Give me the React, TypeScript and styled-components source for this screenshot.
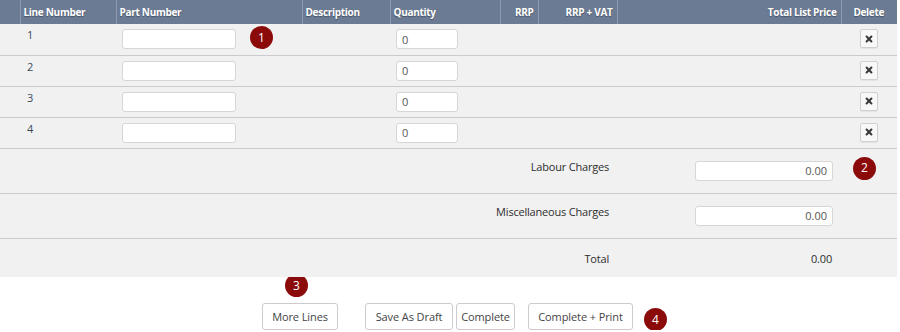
import React from "react";
import styled, { createGlobalStyle } from "styled-components";

const GlobalStyle = createGlobalStyle`
  body {
    margin: 0;
    background: #fff;
    font-family: "Open Sans", "DejaVu Sans", sans-serif;
    font-size: 11px;
    color: #333;
  }
`;

const Page = styled.div`
  width: 897px;
`;

const TableWrap = styled.div`
  position: relative;
  z-index: 1;
`;

const Table = styled.table`
  width: 897px;
  border-collapse: collapse;
  table-layout: fixed;
  background: #f1f1f1;
`;

const Th = styled.th<{ w: number; align?: string }>`
  width: ${({ w }) => w}px;
  height: 24px;
  padding: 0 4px 0 3px;
  box-sizing: border-box;
  background: #6c7b94;
  color: #fff;
  font-weight: 700;
  font-size: 10px;
  letter-spacing: -0.3px;
  text-align: ${({ align }) => align || "left"};
  text-shadow: 0 1px 1px rgba(0, 0, 0, 0.35);
  border-right: 1px solid #8f9aae;
  white-space: nowrap;
  &:last-child {
    border-right: none;
    text-align: center;
  }
`;

const Row = styled.tr<{ h: number }>`
  height: ${({ h }) => h}px;
  border-bottom: 1px solid #cbcbcb;
  &:last-child {
    border-bottom: none;
  }
`;

const Td = styled.td<{ align?: string; pad?: string }>`
  position: relative;
  padding: ${({ pad }) => pad || "5px 6px"};
  vertical-align: top;
  text-align: ${({ align }) => align || "left"};
  color: #333;
`;

const LineNo = styled.span`
  display: block;
  margin-top: -2px;
  padding-left: 1px;
  color: #3a4a5c;
`;

const Input = styled.input<{ w: number; right?: boolean }>`
  display: block;
  width: ${({ w }) => w}px;
  height: 20px;
  box-sizing: border-box;
  margin-left: ${({ right }) => (right ? "auto" : "0")};
  padding: 0 5px;
  border: 1px solid #d6d6d6;
  border-radius: 3px;
  background: #fff;
  font-family: inherit;
  font-size: 11px;
  color: #555;
  text-align: ${({ right }) => (right ? "right" : "left")};
  outline: none;
`;

const DeleteButton = styled.button`
  display: flex;
  align-items: center;
  justify-content: center;
  width: 18px;
  height: 19px;
  margin: 0 auto;
  padding: 0;
  border: 1px solid #d0d0d0;
  border-radius: 2px;
  background: #f8f8f8;
  box-shadow: 0 1px 1px rgba(0, 0, 0, 0.06);
  cursor: pointer;
`;

const Label = styled.span`
  display: block;
  font-size: 11px;
  letter-spacing: -0.2px;
  color: #2e2e2e;
`;

const Badge = styled.span`
  position: absolute;
  display: flex;
  align-items: center;
  justify-content: center;
  width: 23px;
  height: 23px;
  border-radius: 50%;
  background: #8b0b0b;
  color: #fff;
  font-size: 12px;
  line-height: 1;
`;

const Footer = styled.div`
  position: relative;
  display: flex;
  align-items: center;
  padding: 26px 0 0 262px;
`;

const Group = styled.div`
  display: flex;
  gap: 3px;
  margin-left: 27px;
`;

const Button = styled.button<{ w: number; gapLeft?: number }>`
  width: ${({ w }) => w}px;
  height: 27px;
  margin-left: ${({ gapLeft }) => gapLeft || 0}px;
  padding: 0;
  border: 1px solid #cccccc;
  border-radius: 3px;
  background: #fff;
  font-family: inherit;
  font-size: 11px;
  letter-spacing: -0.1px;
  color: #444;
  cursor: pointer;
`;

const Cross = () => (
  <svg width="8" height="8" viewBox="0 0 10 10">
    <path d="M2 2 L8 8 M8 2 L2 8" stroke="#3a3a3a" strokeWidth="2.6" strokeLinecap="round" />
  </svg>
);

const cols = [
  { w: 20, label: "" },
  { w: 96, label: "Line Number" },
  { w: 186, label: "Part Number" },
  { w: 88, label: "Description" },
  { w: 110, label: "Quantity" },
  { w: 38, label: "RRP", align: "right" },
  { w: 79, label: "RRP + VAT", align: "right" },
  { w: 224, label: "Total List Price", align: "right" },
  { w: 56, label: "Delete" },
];

const lines = [1, 2, 3, 4];

export default function App() {
  return (
    <Page>
      <GlobalStyle />
      <TableWrap>
        <Table>
          <thead>
            <tr>
              {cols.map((c, i) => (
                <Th key={i} w={c.w} align={c.align}>
                  {c.label}
                </Th>
              ))}
            </tr>
          </thead>
          <tbody>
            {lines.map((n) => (
              <Row key={n} h={31}>
                <Td />
                <Td>
                  <LineNo>{n}</LineNo>
                </Td>
                <Td>
                  <Input w={114} />
                  {n === 1 && <Badge style={{ left: 134, top: 2 }}>1</Badge>}
                </Td>
                <Td />
                <Td>
                  <Input w={62} defaultValue="0" />
                </Td>
                <Td />
                <Td />
                <Td />
                <Td>
                  <DeleteButton>
                    <Cross />
                  </DeleteButton>
                </Td>
              </Row>
            ))}
            <Row h={45}>
              <Td colSpan={7} align="right" pad="10px 8px 0 8px">
                <Label>Labour Charges</Label>
              </Td>
              <Td pad="12px 8px 0 8px">
                <Input w={138} right defaultValue="0.00" />
              </Td>
              <Td>
                <Badge style={{ left: 12, top: 8 }}>2</Badge>
              </Td>
            </Row>
            <Row h={45}>
              <Td colSpan={7} align="right" pad="10px 8px 0 8px">
                <Label>Miscellaneous Charges</Label>
              </Td>
              <Td pad="12px 8px 0 8px">
                <Input w={138} right defaultValue="0.00" />
              </Td>
              <Td />
            </Row>
            <Row h={39}>
              <Td colSpan={7} align="right" pad="12px 8px 0 8px">
                <Label>Total</Label>
              </Td>
              <Td align="right" pad="12px 9px 0 8px">
                <Label>0.00</Label>
              </Td>
              <Td />
            </Row>
          </tbody>
        </Table>
      </TableWrap>
      <Footer>
        <Badge style={{ left: 285, top: -3 }}>3</Badge>
        <Button w={76}>More Lines</Button>
        <Group>
          <Button w={88}>Save As Draft</Button>
          <Button w={59}>Complete</Button>
          <Button w={105} gapLeft={10}>Complete + Print</Button>
        </Group>
        <Badge style={{ left: 644, top: 31 }}>4</Badge>
      </Footer>
    </Page>
  );
}
